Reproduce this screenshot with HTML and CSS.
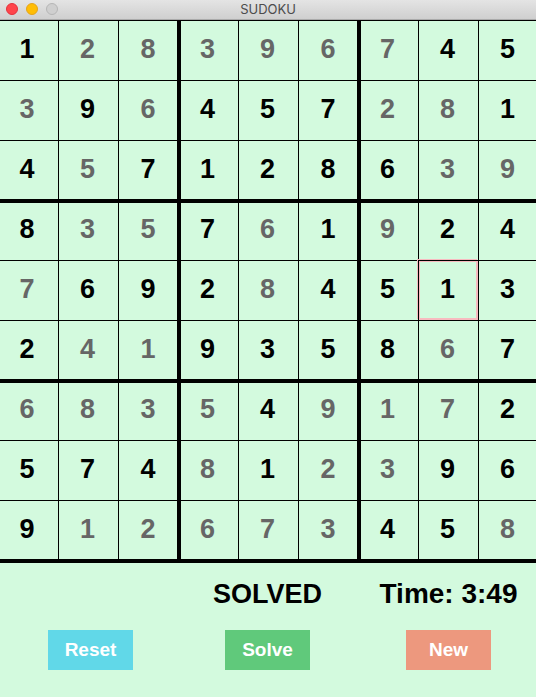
FILE: index.html
```html
<!DOCTYPE html>
<html lang="en">
<head>
<meta charset="utf-8">
<meta name="viewport" content="width=device-width, initial-scale=1">
<title>SUDOKU</title>
<link rel="stylesheet" href="styles.css">
</head>
<body>
<header class="titlebar">
  <div class="lights"><span class="light close"></span><span class="light minimize"></span><span class="light zoom"></span></div>
  <h1 class="title">SUDOKU</h1>
</header>
<main>
  <table class="board">
    <colgroup>
      <col class="c-edge"><col class="c-mid"><col class="c-end">
      <col class="c-start"><col class="c-mid"><col class="c-end">
      <col class="c-start"><col class="c-mid"><col class="c-last">
    </colgroup>
    <tbody>
      <tr><td>1</td><td class="f">2</td><td class="f">8</td><td class="f">3</td><td class="f">9</td><td class="f">6</td><td class="f">7</td><td>4</td><td>5</td></tr>
      <tr><td class="f">3</td><td>9</td><td class="f">6</td><td>4</td><td>5</td><td>7</td><td class="f">2</td><td class="f">8</td><td>1</td></tr>
      <tr><td>4</td><td class="f">5</td><td>7</td><td>1</td><td>2</td><td>8</td><td>6</td><td class="f">3</td><td class="f">9</td></tr>
      <tr><td>8</td><td class="f">3</td><td class="f">5</td><td>7</td><td class="f">6</td><td>1</td><td class="f">9</td><td>2</td><td>4</td></tr>
      <tr><td class="f">7</td><td>6</td><td>9</td><td>2</td><td class="f">8</td><td>4</td><td>5</td><td class="selected">1</td><td>3</td></tr>
      <tr><td>2</td><td class="f">4</td><td class="f">1</td><td>9</td><td>3</td><td>5</td><td>8</td><td class="f">6</td><td>7</td></tr>
      <tr><td class="f">6</td><td class="f">8</td><td class="f">3</td><td class="f">5</td><td>4</td><td class="f">9</td><td class="f">1</td><td class="f">7</td><td>2</td></tr>
      <tr><td>5</td><td>7</td><td>4</td><td class="f">8</td><td>1</td><td class="f">2</td><td class="f">3</td><td>9</td><td>6</td></tr>
      <tr><td>9</td><td class="f">1</td><td class="f">2</td><td class="f">6</td><td class="f">7</td><td class="f">3</td><td>4</td><td>5</td><td class="f">8</td></tr>
    </tbody>
  </table>
  <section class="panel">
    <p class="status">SOLVED</p>
    <p class="time">Time: 3:49</p>
    <button type="button" class="btn reset">Reset</button>
    <button type="button" class="btn solve">Solve</button>
    <button type="button" class="btn new">New</button>
  </section>
</main>
</body>
</html>
```
FILE: styles.css
```css
* {
  box-sizing: border-box;
}

body {
  margin: 0;
  min-height: 100vh;
  background: #d3fade;
  color: #000;
  font-family: "Liberation Sans", Arial, sans-serif;
}

/* Window title bar */
.titlebar {
  display: grid;
  grid-template-columns: 1fr auto 1fr;
  align-items: center;
  height: 21px;
  padding: 0 6px 2px;
  border-bottom: 1px solid #000;
  background: linear-gradient(#e4e4e4, #cecece);
  box-shadow: inset 0 -1px #aaa;
}

.lights {
  display: flex;
  gap: 8px;
}

.light {
  width: 12px;
  height: 12px;
  border: 1px solid #b6b6b6;
  border-radius: 50%;
  background: #cfcfcf;
}

.light.close {
  border-color: #e5303c;
  background: #ff444b;
}

.light.minimize {
  border-color: #e5a41a;
  background: #ffbd05;
}

.title {
  margin: 0;
  color: #4c4c4c;
  font: 400 13px/16px Inter, sans-serif;
}

/* Board: each cell draws its right and bottom line */
.board {
  width: 100%;
  table-layout: fixed;
  border-collapse: separate;
  border-spacing: 0;
}

.c-edge { width: 59px; }
.c-start { width: 58px; }
.c-mid { width: 60px; }
.c-end { width: 62px; }
.c-last { width: 57px; }

td {
  height: 60px;
  padding: 0 2px 4px 0;
  border: 0 solid #000;
  border-width: 0 1px 1px 0;
  font-size: 27px;
  font-weight: 700;
  line-height: 32px;
  text-align: center;
  vertical-align: middle;
}

.f {
  color: #666;
}

td:nth-child(3n) {
  padding-right: 0;
  border-right-width: 4px;
}

td:nth-child(3n + 1) {
  padding-right: 4px;
}

td:last-child {
  border-right-width: 0;
}

tr:nth-child(3n) td {
  height: 62px;
  padding-bottom: 2px;
  border-bottom-width: 4px;
}

tr:nth-child(3n + 4) td {
  height: 58px;
  padding-bottom: 6px;
}

.selected {
  box-shadow: inset 1px 1px #f7babf, inset -2px -2px #f7babf, -1px -1px #000, -2px -2px #f7babf;
}

/* Status and actions */
.panel {
  display: grid;
  grid-template-columns: 48fr 85px 92fr 85px 96fr 85px 45fr;
  row-gap: 20px;
  padding: 15px 0 27px;
}

.status,
.time {
  grid-row: 1;
  justify-self: center;
  margin: 0;
  font-size: 27px;
  font-weight: 700;
  line-height: 32px;
  white-space: nowrap;
}

.status { grid-column: 4; }

.time {
  grid-column: 6;
  font-size: 28px;
}

.btn {
  grid-row: 2;
  height: 40px;
  padding: 0;
  border: 0;
  color: #fff;
  font: 700 19px/24px "Liberation Sans", Arial, sans-serif;
  cursor: pointer;
}

.reset { grid-column: 2; background: #61d8e8; }
.solve { grid-column: 4; background: #60c97b; }
.new { grid-column: 6; background: #ed987e; }
```
